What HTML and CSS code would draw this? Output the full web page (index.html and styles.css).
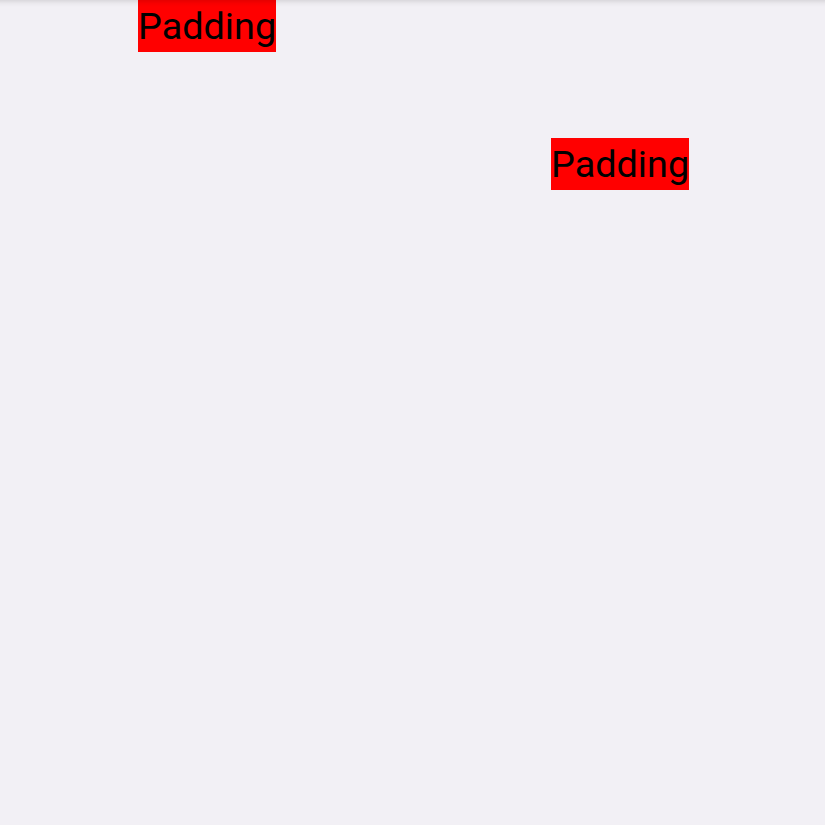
FILE: index.html
```html
<!DOCTYPE html>
<html>
<head>
<meta charset="utf-8">
<link rel="stylesheet" href="styles.css">
</head>
<body>
<div class="screen">
  <div class="topshadow"></div>
  <span class="pad pad-one">Padding</span>
  <span class="pad pad-two">Padding</span>
</div>
</body>
</html>
```
FILE: styles.css
```css
html, body {
  margin: 0;
  padding: 0;
  background: #f2f0f5;
}
.screen {
  position: relative;
  width: 825px;
  height: 825px;
  display: flex;
  flex-direction: column;
  align-items: flex-start;
  background: #f2f0f5;
  font-family: Roboto, "Noto Sans", sans-serif;
}
.topshadow {
  position: absolute;
  left: 0;
  top: 0;
  right: 0;
  height: 7px;
  background: linear-gradient(to bottom, rgba(0,0,0,0.10), rgba(0,0,0,0.03) 50%, rgba(0,0,0,0));
  pointer-events: none;
}
.pad {
  display: block;
  background: #ff0000;
  color: #000;
  font-size: 37.8px;
  line-height: 52px;
  height: 52px;
  width: 138px;
  white-space: nowrap;
}
.pad-one {
  margin-left: 138px;
}
.pad-two {
  margin-left: 551px;
  margin-top: 86px;
}
```
